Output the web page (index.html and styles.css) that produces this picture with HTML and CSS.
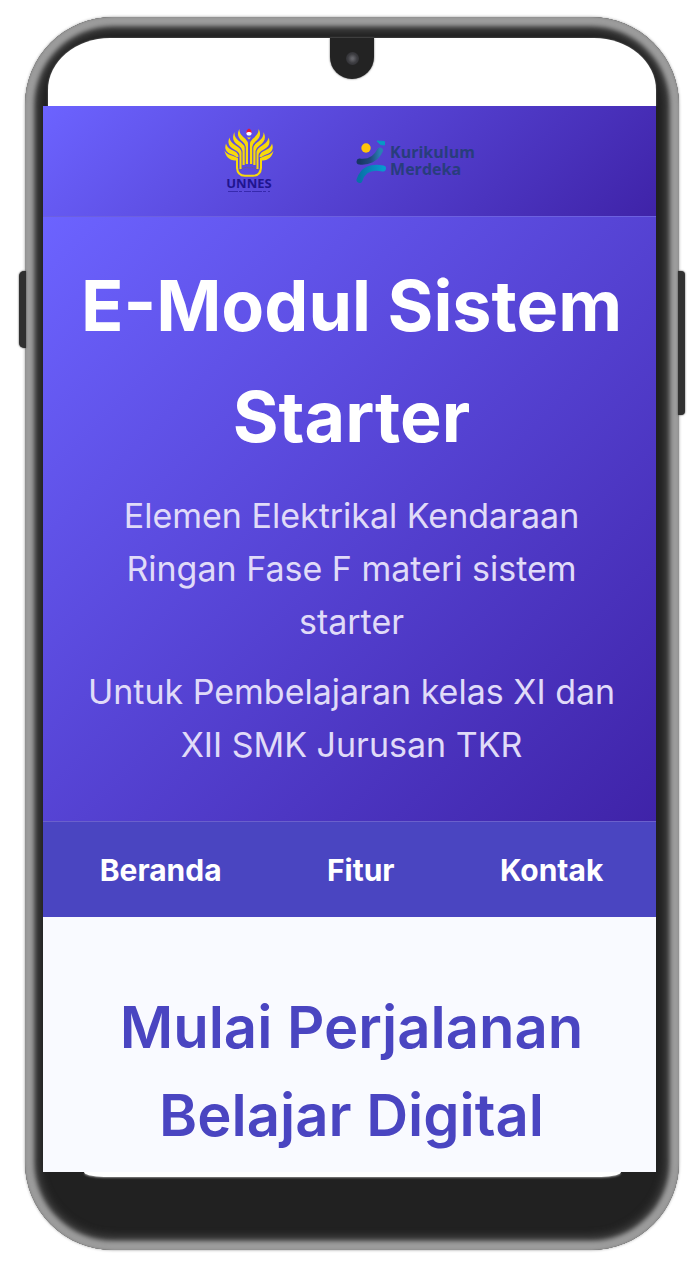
FILE: index.html
```html
<!DOCTYPE html>
<html lang="id">
<head>
<meta charset="utf-8">
<meta name="viewport" content="width=device-width, initial-scale=1">
<title>E-Modul Sistem Starter</title>
<link rel="stylesheet" href="styles.css">
</head>
<body>
<div class="phone">
  <span class="side-button side-button-left"></span>
  <span class="side-button side-button-right"></span>
  <div class="phone-top">
    <span class="notch"><span class="camera"></span></span>
  </div>
  <div class="screen">
    <header class="logos">
      <svg class="logo-unnes" viewBox="0 0 50 66" role="img" aria-label="UNNES">
        <g id="wing" fill="#f8d90a">
          <path d="M15.500 1C15 5 18 8 21.500 11Q24 13.500 24 16V36H21.800V19Q21.500 16 18.500 13.500C14 10 12.500 6 15.500 1Z"/>
          <path d="M10.500 4C10 9 13.500 12 17.500 15Q20.700 17.500 20.700 20V37H18.500V23Q18 20 14.500 17.500C9.500 14.500 7.500 10 10.500 4Z"/>
          <path d="M5.500 9.500C6 14 10 16.500 14 19Q17.500 21.500 17.500 24.500V41H15.500V27Q15 24 11 22C5 19 3 15 5.500 9.500Z"/>
          <path d="M2 15.500C3 20 7 21.500 11 23.500Q14.500 25.500 14.500 29H12.500Q11 27.500 8 26.500C2 24.500 0 21 2 15.500Z"/>
          <path d="M.5 22.500C2.500 26 6 27 9 28L14 30V39.500Q14.500 46.500 21 46.800H25V48.800H21Q12.500 48.500 12 40V32.500C6 33 1.500 28.500 .5 22.500Z"/>
        </g>
        <use href="#wing" transform="translate(50 0) scale(-1 1)"/>
        <circle cx="25" cy="5" r="2.600" fill="#fff"/>
        <path d="M22 5L23 2L25 .5L27 2L28 5L26 4H24Z" fill="#e81535"/>
        <path d="M23 9.500H27L25 11.500Z" fill="#f8d90a"/>
        <path d="M16.500 42.500Q20 38 25 40Q30 38 33.500 42.500" fill="none" stroke="#6c5a96" stroke-width="1"/>
        <text x="25" y="60" text-anchor="middle" class="unnes-name">UNNES</text>
        <path d="M4 63.500H46" stroke="#20148f" stroke-opacity=".6" stroke-width="1" stroke-dasharray="10 1 3 2 7 1"/>
      </svg>
      <div class="logo-merdeka">
        <svg class="merdeka-mark" viewBox="0 0 32 44" aria-hidden="true">
          <defs>
            <linearGradient id="arm"><stop offset="0" stop-color="#173665"/><stop offset=".55" stop-color="#204a7e"/><stop offset="1" stop-color="#287fb4"/></linearGradient>
            <linearGradient id="leg"><stop offset="0" stop-color="#0871a8"/><stop offset="1" stop-color="#0799cf"/></linearGradient>
          </defs>
          <circle cx="12" cy="9" r="4.700" fill="#ffc50b"/>
          <path d="M23 2L30.500 2.500V6L26.500 5.500Z" fill="#0799c5" stroke="#0799c5" stroke-linejoin="round"/>
          <path d="M5.500 22.500C14 23.500 22 20 26 11.500" fill="none" stroke="url(#arm)" stroke-width="6" stroke-linecap="round"/>
          <path d="M5.500 41C9 30 18 27 29 29.500" fill="none" stroke="url(#leg)" stroke-width="6" stroke-linecap="round"/>
        </svg>
        <span class="merdeka-name"><span>Kurikulum</span><span>Merdeka</span></span>
      </div>
    </header>
    <section class="hero">
      <h1 class="hero-title">E-Modul Sistem<br>Starter</h1>
      <p class="hero-text">Elemen Elektrikal Kendaraan<br>Ringan Fase F materi sistem<br>starter</p>
      <p class="hero-text">Untuk Pembelajaran kelas XI dan<br>XII SMK Jurusan TKR</p>
    </section>
    <nav class="menu">
      <a class="menu-link" href="#beranda">Beranda</a>
      <a class="menu-link" href="#fitur">Fitur</a>
      <a class="menu-link" href="#kontak">Kontak</a>
    </nav>
    <main class="intro">
      <h2 class="intro-title">Mulai Perjalanan<br>Belajar Digital</h2>
    </main>
  </div>
  <div class="phone-lip"></div>
</div>
</body>
</html>
```
FILE: styles.css
```css
* {
  box-sizing: border-box;
}

body {
  margin: 0;
  padding: 17px 21px 16px 25px;
  background: #fff;
  font-family: "Inter", "Open Sans", sans-serif;
}

.phone {
  position: relative;
  padding: 21px 23px 73px 18px;
  border-radius: 88px;
  background: #212121;
  box-shadow:
    0 0 3px #999,
    inset 0 0 2px 1px #909090,
    inset 0 0 4px 9px #9c9c9c,
    inset 0 0 8px 13px #4a4a4a;
}

.side-button {
  position: absolute;
  top: 254px;
  width: 7px;
  background: #303030;
  box-shadow: 0 0 2px #444;
}

.side-button-left {
  left: -6px;
  height: 77px;
  border-radius: 5px 0 0 5px;
}

.side-button-right {
  right: -6px;
  height: 144px;
  border-radius: 0 4px 4px 0;
}

.phone-top {
  display: flex;
  justify-content: center;
  height: 68px;
  margin-left: 5px;
  border-radius: 62px 62px 0 0 / 52px 52px 0 0;
  background: #fff;
  box-shadow: 0 0 2px #777;
}

.notch {
  display: flex;
  align-items: center;
  justify-content: center;
  width: 44px;
  height: 41px;
  border-radius: 0 0 22px 22px;
  background: #232323;
  box-shadow: 0 0 2px #555;
}

.camera {
  width: 13px;
  height: 13px;
  border-radius: 50%;
  background: radial-gradient(circle, #65656a 10%, #3c3c40 50%, #29292c);
}

.screen {
  position: relative;
  background: #f9faff;
}

.logos {
  display: flex;
  align-items: center;
  justify-content: center;
  gap: 80px;
  height: 111px;
  border-bottom: 1px solid #6c60df;
  background: linear-gradient(135deg, #6c63ff, #3f23a8);
}

.logo-unnes {
  width: 50px;
  height: 66px;
}

.unnes-name {
  fill: #20148f;
  font: 700 13px "Open Sans", sans-serif;
}

.logo-merdeka {
  display: flex;
  align-items: center;
  gap: 4px;
}

.merdeka-mark {
  width: 32px;
  height: 44px;
}

.merdeka-name {
  display: grid;
  color: #283d7c;
  font: 700 16px/17px "Open Sans", sans-serif;
}

.hero {
  padding: 33px 16px 50px 20px;
  border-bottom: 1px solid #6a60cc;
  background: linear-gradient(135deg, #6c63ff, #3f23a8);
  color: #fff;
  text-align: center;
  white-space: nowrap;
}

.hero-title {
  margin: 0;
  font-size: 70px;
  font-weight: 700;
  line-height: 111px;
}

.hero-text {
  margin: 17px 0 0;
  color: #e0dbf8;
  font-size: 34px;
  font-weight: 400;
  line-height: 53px;
}

.menu {
  display: flex;
  align-items: center;
  justify-content: space-around;
  height: 95px;
  padding-left: 4px;
  background: #4a45c1;
}

.menu-link {
  color: #fff;
  font-size: 30px;
  font-weight: 700;
  line-height: 44px;
  text-decoration: none;
}

.intro {
  padding: 66px 16px 13px 20px;
  text-align: center;
  white-space: nowrap;
}

.intro-title {
  margin: 0;
  color: #4a45c1;
  font-size: 58px;
  font-weight: 600;
  line-height: 88px;
}

.phone-lip {
  height: 5px;
  margin: 0 35px 0 41px;
  border-radius: 0 0 20px 20px / 0 0 5px 5px;
  background: #fff;
  box-shadow: 0 1px 2px #888;
}
```
